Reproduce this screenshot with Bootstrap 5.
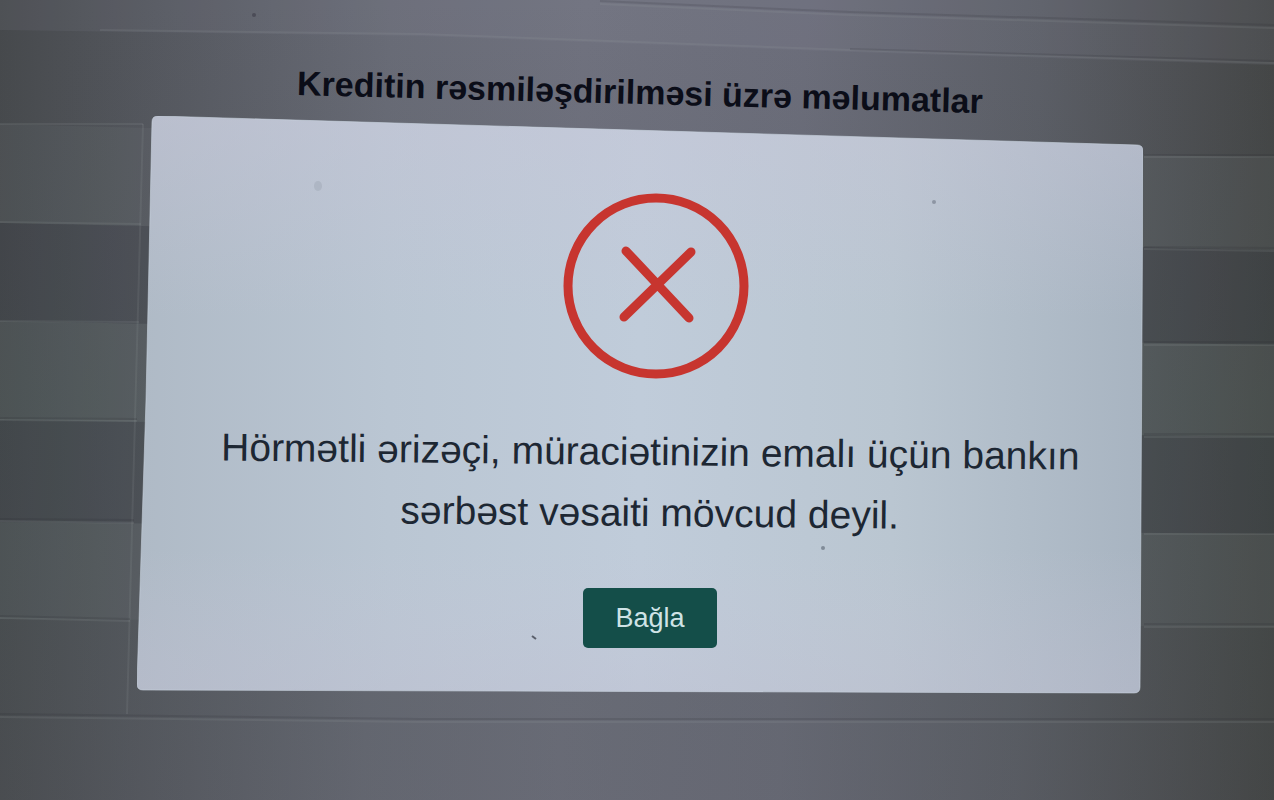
<!DOCTYPE html>
<html lang="az">
<head>
<meta charset="utf-8">
<meta name="viewport" content="width=device-width, initial-scale=1">
<title>Kreditin rəsmiləşdirilməsi üzrə məlumatlar</title>
<link href="https://cdn.jsdelivr.net/npm/bootstrap@5.3.0/dist/css/bootstrap.min.css" rel="stylesheet">
<style>
  body {
    font-family: "Liberation Sans", Arial, sans-serif;
    background: linear-gradient(92deg, #46494c 0%, #55585f 12%, #696c77 30%, #70727f 45%, #6c6e7b 62%, #5c5f67 80%, #4c4e51 92%, #414342 100%);
  }
  .backdrop-rows { z-index: -1; }
  .page-body { padding: 68px 0 0 6px; }
  .page-title {
    font-size: 34px;
    line-height: 48px;
    color: #0b0d18;
    transform: rotate(1.5deg);
  }
  .dialog-panel { padding: 77px 40px 46px 60px; width: 1006px; max-width: 100%; }
  .panel-shape { z-index: -1; }
  .error-icon { width: 196px; height: 186px; overflow: visible; }
  .message {
    margin: 42px 0 45px;
    font-size: 39px;
    line-height: 61px;
    color: #1d2733;
    transform: rotate(0.6deg);
  }
  .btn-close-dialog {
    --bs-btn-color: #cfe3e6;
    --bs-btn-bg: #144e49;
    --bs-btn-hover-color: #fff;
    --bs-btn-hover-bg: #103f3b;
    --bs-btn-active-bg: #103f3b;
    --bs-btn-active-color: #fff;
    --bs-btn-border-radius: 5px;
    width: 134px;
    height: 60px;
    font-size: 27px;
    line-height: 32px;
  }
</style>
</head>
<body class="min-vh-100 position-relative overflow-x-hidden">

<!-- dimmed table rows behind the dialog -->
<svg class="backdrop-rows position-absolute top-0 start-0 w-100 h-100" viewBox="0 0 1274 800" preserveAspectRatio="none" aria-hidden="true">
  <defs>
    <linearGradient id="cool" x1="0" y1="0" x2="0" y2="1">
      <stop offset="0" stop-color="#4a4a52" stop-opacity="0"/>
      <stop offset=".5" stop-color="#455650" stop-opacity=".24"/>
      <stop offset="1" stop-color="#4d5054" stop-opacity=".22"/>
    </linearGradient>
  </defs>
  <rect width="1274" height="800" fill="url(#cool)"/>
  <path d="M0 0H1274V65L850 52L420 36L0 30Z" fill="#8b8b99" fill-opacity=".12"/>
  <g fill="#9fb0aa" fill-opacity=".07">
    <path d="M0 124L1274 158V250L0 223Z"/>
    <path d="M0 321L1274 345V437L0 420Z"/>
    <path d="M0 522L1274 534V627L0 619Z"/>
  </g>
  <g fill="#23242e" fill-opacity=".12">
    <path d="M0 223L1274 250V345L0 321Z"/>
    <path d="M0 420L1274 437V534L0 522Z"/>
  </g>
  <g fill="none" stroke="#a3a8ac" stroke-opacity=".13" stroke-width="2">
    <path d="M100 30L420 34L850 50L1274 63"/>
    <path d="M600 4L850 15L1274 28"/>
    <path d="M0 124H143M1144 157H1274"/>
    <path d="M0 222L141 224M1144 249L1274 251"/>
    <path d="M0 321L139 322M1144 345H1274"/>
    <path d="M0 420L137 421M1144 437H1274"/>
    <path d="M0 521L134 523M1144 534H1274"/>
    <path d="M0 618L130 621M1144 627H1274"/>
    <path d="M143 124L127 714"/>
    <path d="M0 717L420 722H1274"/>
  </g>
  <g fill="none" stroke="#22242b" stroke-opacity=".14" stroke-width="2">
    <path d="M600 1L850 12L1274 25M850 49L1274 61"/>
    <path d="M0 418L137 419M0 519L134 520M0 616L130 619M0 714L420 719H1274"/>
    <path d="M1144 155H1274M1144 247L1274 248M1144 342H1274M1144 434H1274M1144 624H1274"/>
  </g>
  <circle cx="254" cy="15" r="2" fill="#4b4c57"/>
</svg>

<main class="page-body d-flex flex-column align-items-center">
  <h1 class="page-title fw-bold text-center mb-0">Kreditin rəsmiləşdirilməsi üzrə məlumatlar</h1>

  <section class="dialog-panel position-relative d-flex flex-column align-items-center" role="dialog" aria-labelledby="dialog-message">
    <!-- panel surface, seen at a slight angle -->
    <svg class="panel-shape position-absolute top-0 start-0 w-100 h-100" viewBox="0 0 1006 578" preserveAspectRatio="none" aria-hidden="true">
      <defs>
        <linearGradient id="surface" x1="0" y1="0" x2="1" y2="0">
          <stop offset="0" stop-color="#afbac6"/>
          <stop offset=".25" stop-color="#bac6d3"/>
          <stop offset=".5" stop-color="#c0ccda"/>
          <stop offset=".75" stop-color="#bac6d1"/>
          <stop offset="1" stop-color="#a8b4c1"/>
        </linearGradient>
        <linearGradient id="tint" x1="0" y1="0" x2="0" y2="1">
          <stop offset="0" stop-color="#c9c5d8" stop-opacity=".4"/>
          <stop offset=".35" stop-color="#c9c5d8" stop-opacity="0"/>
          <stop offset=".75" stop-color="#c9c5d8" stop-opacity="0"/>
          <stop offset="1" stop-color="#c0bdd0" stop-opacity=".35"/>
        </linearGradient>
      </defs>
      <path d="M21 0L1000 29Q1006 29 1006 35L1003 571Q1003 577 997 577L6 574Q0 574 0 568L9 284L15 6Q15 0 21 0Z" fill="url(#surface)"/>
      <path d="M21 0L1000 29Q1006 29 1006 35L1003 571Q1003 577 997 577L6 574Q0 574 0 568L9 284L15 6Q15 0 21 0Z" fill="url(#tint)" stroke="#c8d2de" stroke-opacity=".6"/>
      <path d="M395 520L399 523" stroke="#5a5f6b" stroke-width="2"/>
      <circle cx="686" cy="432" r="2" fill="#808b98"/>
      <circle cx="797" cy="86" r="2" fill="#8d95a3"/>
      <ellipse cx="181" cy="70" rx="4" ry="5" fill="#a5aebb" fill-opacity=".6"/>
    </svg>

    <svg class="error-icon" viewBox="0 0 196 186" fill="none" stroke="#c7352f" role="img" aria-label="Xəta">
      <circle cx="104" cy="93" r="88" stroke-width="9"/>
      <path d="M74 58L137 125M139 59L72 124" stroke-width="9" stroke-linecap="round"/>
    </svg>

    <p id="dialog-message" class="message text-center">Hörmətli ərizəçi, müraciətinizin emalı üçün bankın sərbəst vəsaiti mövcud deyil.</p>

    <button type="button" class="btn btn-close-dialog p-0">Bağla</button>
  </section>
</main>

<script src="https://cdn.jsdelivr.net/npm/bootstrap@5.3.0/dist/js/bootstrap.bundle.min.js"></script>
</body>
</html>
